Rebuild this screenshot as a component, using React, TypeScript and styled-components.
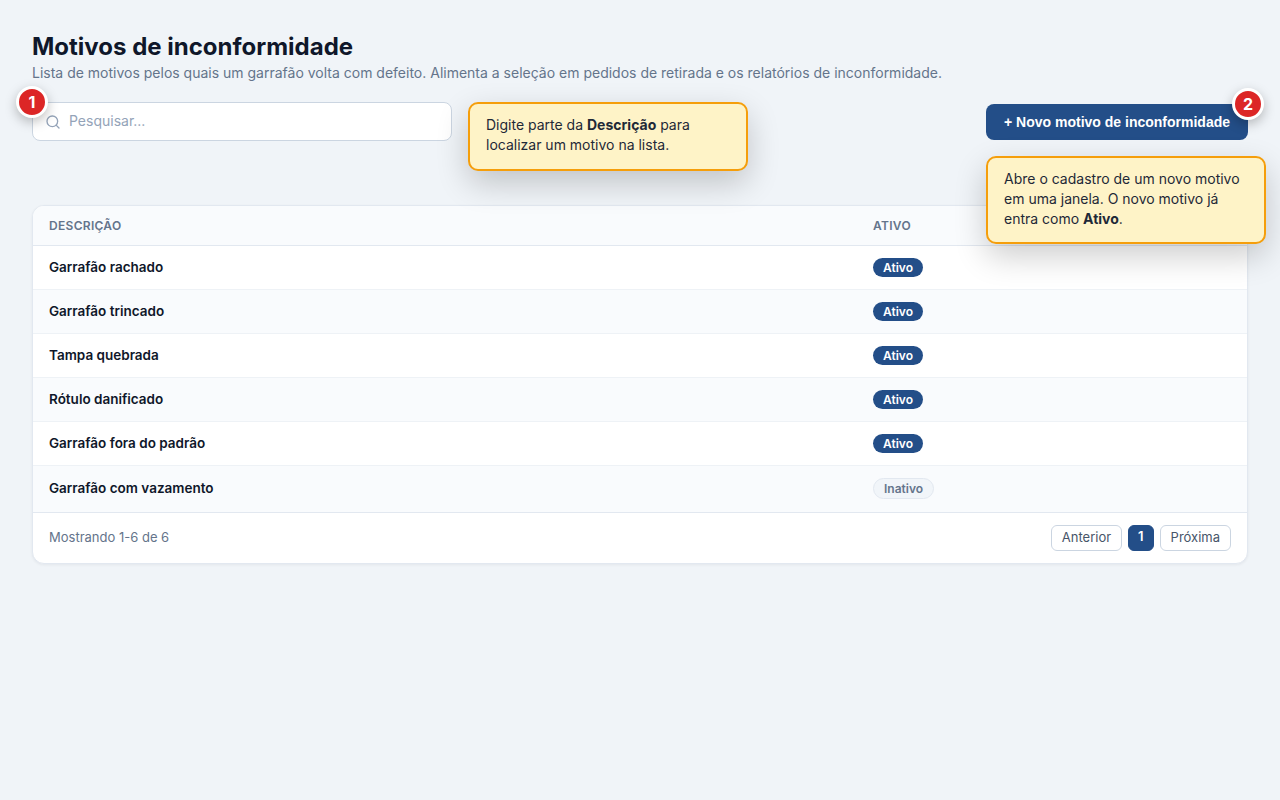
import React from "react";
import styled, { createGlobalStyle, css } from "styled-components";

const Global = createGlobalStyle`
  *, *::before, *::after { box-sizing: border-box; }
  body {
    margin: 0;
    background: #f0f4f8;
    color: #0f172a;
    font-family: Inter, "Liberation Sans", sans-serif;
    font-size: 14px;
    line-height: 20px;
  }
`;

const Page = styled.main`
  width: 1280px;
  height: 800px;
  padding: 32px;
  overflow: hidden;
`;

const Title = styled.h1`
  margin: 0;
  font-size: 24px;
  line-height: 29px;
  font-weight: 700;
`;

const Subtitle = styled.p`
  margin: 3px 0 0;
  line-height: 17px;
  color: #64748b;
`;

const Toolbar = styled.div`
  display: flex;
  justify-content: space-between;
  align-items: center;
  height: 39px;
  margin-top: 21px;
`;

const Anchor = styled.div`
  position: relative;
`;

const SearchBox = styled.label`
  display: flex;
  align-items: center;
  gap: 8px;
  width: 420px;
  height: 39px;
  padding: 0 12px;
  background: #fff;
  border: 1px solid #cbd5e1;
  border-radius: 8px;
  svg { margin-top: 1px; }
`;

const SearchInput = styled.input`
  flex: 1;
  padding: 0 0 2px;
  border: 0;
  outline: 0;
  background: transparent;
  font: inherit;
  color: #0f172a;
  &::placeholder { color: #94a3b8; opacity: 1; }
`;

const PrimaryButton = styled.button`
  display: block;
  height: 36px;
  padding: 0 18px;
  border: 0;
  border-radius: 8px;
  background: #234e88;
  color: #fff;
  font: 600 14px/16px "Liberation Sans", Arial, sans-serif;
  white-space: nowrap;
`;

const Marker = styled.span<{ $side: "left" | "right" }>`
  position: absolute;
  top: -16px;
  ${({ $side }) => $side}: -16px;
  z-index: 2;
  display: flex;
  align-items: center;
  justify-content: center;
  width: 32px;
  height: 32px;
  border: 3px solid #fff;
  border-radius: 50%;
  background: #dc2626;
  color: #fff;
  font-size: 16px;
  font-weight: 700;
  box-shadow: 0 4px 12px rgba(0, 0, 0, 0.25);
`;

const Callout = styled.div<{ $place: "beside" | "below" }>`
  position: absolute;
  z-index: 1;
  width: 280px;
  padding: 11px 16px 14px;
  border: 2px solid #f59e0b;
  border-radius: 10px;
  background: #fef3c7;
  color: #1f2937;
  line-height: 20px;
  box-shadow: 0 12px 32px rgba(0, 0, 0, 0.2);
  ${({ $place }) =>
    $place === "beside"
      ? css`top: 0; left: 436px; height: 69px;`
      : css`top: 52px; left: 0; height: 88px;`}
`;

const Card = styled.section`
  margin-top: 64px;
  border: 1px solid #e2e8f0;
  border-radius: 12px;
  background: #fff;
  overflow: hidden;
  box-shadow: 0 1px 3px rgba(15, 23, 42, 0.06);
`;

const Table = styled.table`
  width: 100%;
  border-collapse: separate;
  border-spacing: 0;
  table-layout: fixed;
`;

const HeadCell = styled.th<{ $width?: number }>`
  width: ${({ $width }) => ($width ? `${$width}px` : "auto")};
  height: 40px;
  padding: 0 16px;
  border-bottom: 1px solid #e2e8f0;
  background: #f9fbfd;
  color: #64748b;
  font-size: 12px;
  font-weight: 600;
  letter-spacing: 0.3px;
  text-align: left;
  text-transform: uppercase;
`;

const Row = styled.tr<{ $last: boolean }>`
  height: ${({ $last }) => ($last ? 46 : 44)}px;
  &:nth-child(even) { background: #f9fbfd; }
`;

const Cell = styled.td<{ $last: boolean }>`
  padding: 0 16px;
  border-bottom: ${({ $last }) => ($last ? "0" : "1px solid #eef2f6")};
  font-size: 13.5px;
  font-weight: 600;
`;

const Name = styled.span`
  display: block;
  padding-bottom: 2px;
`;

const Badge = styled.span<{ $active: boolean }>`
  display: block;
  width: fit-content;
  margin-bottom: ${({ $active }) => ($active ? 0 : 2)}px;
  padding: 2px 10px;
  border: ${({ $active }) => ($active ? "0" : "1px solid #e2e8f0")};
  border-radius: 999px;
  background: ${({ $active }) => ($active ? "#234e88" : "#f1f5f9")};
  color: ${({ $active }) => ($active ? "#fff" : "#64748b")};
  font-size: 12px;
  line-height: 15px;
  font-weight: 600;
`;

const Footer = styled.footer`
  display: flex;
  justify-content: space-between;
  align-items: center;
  height: 51px;
  padding: 0 16px;
  border-top: 1px solid #e2e8f0;
  color: #64748b;
  font-size: 13px;
`;

const Summary = styled.span`
  padding-bottom: 2px;
`;

const Pager = styled.nav`
  display: flex;
  gap: 6px;
`;

const PageButton = styled.button<{ $current?: boolean }>`
  height: 26px;
  padding: 0 ${({ $current }) => ($current ? "9px 4px" : "10px 2px")};
  border: 1px solid ${({ $current }) => ($current ? "#234e88" : "#cbd5e1")};
  border-radius: 6px;
  background: ${({ $current }) => ($current ? "#234e88" : "#fff")};
  color: ${({ $current }) => ($current ? "#fff" : "#475569")};
  font-family: inherit;
  font-size: 13px;
  line-height: 16px;
  font-weight: ${({ $current }) => ($current ? 600 : 400)};
`;

const reasons = [
  { name: "Garrafão rachado", active: true },
  { name: "Garrafão trincado", active: true },
  { name: "Tampa quebrada", active: true },
  { name: "Rótulo danificado", active: true },
  { name: "Garrafão fora do padrão", active: true },
  { name: "Garrafão com vazamento", active: false },
];

function SearchIcon() {
  return (
    <svg width="16" height="16" viewBox="0 0 24 24" fill="none" stroke="#94a3b8" strokeWidth="2" strokeLinecap="round">
      <circle cx="11" cy="11" r="8" />
      <path d="m21 21-4.35-4.35" />
    </svg>
  );
}

export default function App() {
  return (
    <>
      <Global />
      <Page>
        <Title>Motivos de inconformidade</Title>
        <Subtitle>
          Lista de motivos pelos quais um garrafão volta com defeito. Alimenta a seleção em pedidos de retirada e os relatórios de inconformidade.
        </Subtitle>
        <Toolbar>
          <Anchor>
            <SearchBox>
              <SearchIcon />
              <SearchInput placeholder="Pesquisar..." />
            </SearchBox>
            <Marker $side="left">1</Marker>
            <Callout $place="beside">
              Digite parte da <strong>Descrição</strong> para localizar um motivo na lista.
            </Callout>
          </Anchor>
          <Anchor>
            <PrimaryButton>+ Novo motivo de inconformidade</PrimaryButton>
            <Marker $side="right">2</Marker>
            <Callout $place="below">
              Abre o cadastro de um novo motivo em uma janela. O novo motivo já entra como <strong>Ativo</strong>.
            </Callout>
          </Anchor>
        </Toolbar>
        <Card>
          <Table>
            <thead>
              <tr>
                <HeadCell>Descrição</HeadCell>
                <HeadCell $width={390}>Ativo</HeadCell>
              </tr>
            </thead>
            <tbody>
              {reasons.map(({ name, active }, i) => {
                const last = i === reasons.length - 1;
                return (
                  <Row key={name} $last={last}>
                    <Cell $last={last}><Name>{name}</Name></Cell>
                    <Cell $last={last}>
                      <Badge $active={active}>{active ? "Ativo" : "Inativo"}</Badge>
                    </Cell>
                  </Row>
                );
              })}
            </tbody>
          </Table>
          <Footer>
            <Summary>Mostrando 1-6 de 6</Summary>
            <Pager>
              <PageButton>Anterior</PageButton>
              <PageButton $current>1</PageButton>
              <PageButton>Próxima</PageButton>
            </Pager>
          </Footer>
        </Card>
      </Page>
    </>
  );
}
